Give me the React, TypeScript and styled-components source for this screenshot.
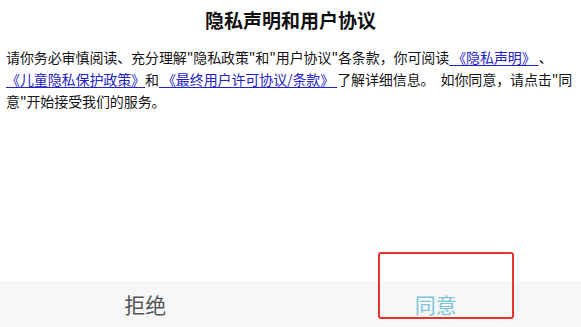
import React from 'react'
import styled, { createGlobalStyle } from 'styled-components'

const GlobalStyle = createGlobalStyle`
  html, body {
    margin: 0;
    padding: 0;
    background: #ffffff;
  }
  body {
    font-family: "Noto Sans CJK SC", "Noto Sans", sans-serif;
  }
`

const Page = styled.div`
  position: relative;
  width: 100%;
  height: 100vh;
  display: flex;
  flex-direction: column;
  overflow: hidden;
`

const Content = styled.div`
  flex: 1;
  padding: 8px 2px 0 6px;
`

const Title = styled.h1`
  margin: 0;
  font-size: 19px;
  line-height: 24px;
  font-weight: 700;
  color: #111111;
  text-align: center;
  padding-right: 4px;
`

const Body = styled.p`
  margin: 14px 0 0;
  font-size: 14px;
  line-height: 22px;
  letter-spacing: -0.1px;
  color: #151515;
`

const Link = styled.a`
  color: #2323c4;
  text-decoration: underline;
  text-underline-offset: 2px;
`

const Footer = styled.div`
  height: 46px;
  display: grid;
  grid-template-columns: 1fr 1fr;
  background: #f7f7f7;
`

const FooterButton = styled.button<{ $primary?: boolean }>`
  border: none;
  background: transparent;
  font-family: "Noto Sans CJK SC", sans-serif;
  font-size: 21px;
  padding: 0;
  color: ${p => (p.$primary ? '#7cc5d6' : '#555555')};
  display: flex;
  align-items: center;
  justify-content: center;
`

const Highlight = styled.div`
  position: absolute;
  left: 378px;
  top: 252px;
  width: 136px;
  height: 67px;
  box-sizing: border-box;
  border: 2px solid #e4342c;
  border-radius: 3px;
  pointer-events: none;
`

export default function App() {
  return (
    <>
      <GlobalStyle />
      <Page>
        <Content>
          <Title>隐私声明和用户协议</Title>
          <Body>
            请你务必审慎阅读、充分理解"隐私政策"和"用户协议"各条款，你可阅读
            <Link> 《隐私声明》 </Link>、
            <br />
            <Link>《儿童隐私保护政策》</Link>和<Link> 《最终用户许可协议/条款》 </Link>
            了解详细信息。&nbsp;&nbsp;如你同意，请点击"同意"开始接受我们的服务。
          </Body>
        </Content>
        <Footer>
          <FooterButton>拒绝</FooterButton>
          <FooterButton $primary>同意</FooterButton>
        </Footer>
        <Highlight />
      </Page>
    </>
  )
}
